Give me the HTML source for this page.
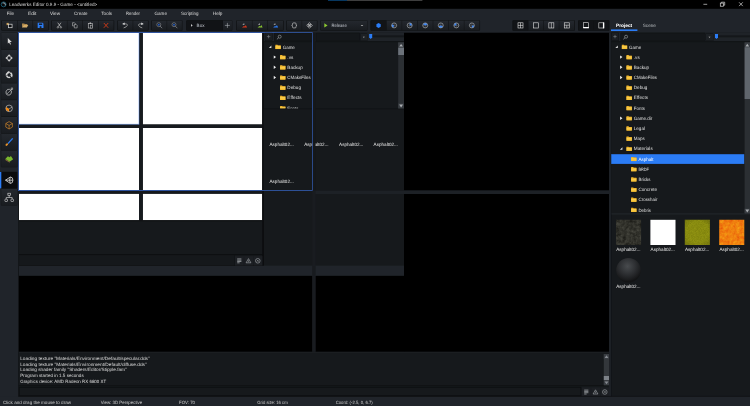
<!DOCTYPE html>
<html><head><meta charset="utf-8"><title>Leadwerks Editor</title>
<style>
html,body{margin:0;padding:0;background:#20242a;overflow:hidden}
svg{display:block;font-family:"Liberation Sans",sans-serif}
text{white-space:pre;text-rendering:geometricPrecision}
</style></head><body>
<svg width="750" height="406" viewBox="0 0 750 406">
<rect x="0.00" y="0.00" width="750.00" height="406.00" fill="#20242a" />
<rect x="0.00" y="0.00" width="750.00" height="8.80" fill="#000" />
<rect x="328.00" y="0.00" width="19.00" height="0.70" fill="#0b4f8a" />
<rect x="347.00" y="0.00" width="75.40" height="0.70" fill="#5a5a5a" />
<rect x="18.60" y="32.70" width="591.40" height="363.90" fill="#16191c" />
<rect x="404.00" y="32.80" width="205.20" height="157.70" fill="#000" />
<rect x="404.00" y="194.00" width="205.20" height="157.80" fill="#000" />
<rect x="18.80" y="275.70" width="293.60" height="76.10" fill="#000" />
<rect x="315.40" y="275.70" width="88.80" height="76.10" fill="#000" />
<rect x="312.40" y="190.50" width="296.90" height="3.50" fill="#1d2126" />
<rect x="312.20" y="190.40" width="3.40" height="161.40" fill="#191c20" />
<rect x="18.60" y="265.60" width="385.40" height="10.10" fill="#20242a" />
<rect x="312.20" y="265.60" width="3.40" height="10.10" fill="#181b1f" />
<rect x="610.00" y="32.70" width="140.00" height="363.90" fill="#16191c" />
<rect x="609.10" y="32.70" width="2.00" height="363.90" fill="#1e2227" />
<rect x="611.00" y="32.70" width="0.70" height="363.90" fill="#121417" />
<rect x="0.00" y="396.60" width="750.00" height="9.40" fill="#20242a" />
<rect x="19.00" y="33.00" width="120.10" height="91.50" fill="#ffffff" />
<rect x="142.80" y="33.00" width="119.40" height="91.50" fill="#ffffff" />
<rect x="19.00" y="128.00" width="120.10" height="62.00" fill="#ffffff" />
<rect x="142.80" y="128.00" width="119.40" height="62.00" fill="#ffffff" />
<rect x="19.00" y="193.70" width="120.10" height="26.50" fill="#ffffff" />
<rect x="142.80" y="193.70" width="119.40" height="26.50" fill="#ffffff" />
<rect x="139.10" y="33.00" width="3.70" height="187.20" fill="#171a1e" />
<rect x="19.00" y="124.50" width="243.20" height="3.50" fill="#171a1e" />
<rect x="19.00" y="190.00" width="243.20" height="3.70" fill="#15181c" />
<rect x="262.20" y="32.80" width="1.80" height="232.80" fill="#0c0d0f" />
<rect x="19.00" y="254.20" width="244.00" height="0.90" fill="#0c0e10" />
<rect x="19.00" y="265.00" width="244.00" height="0.70" fill="#101214" />
<rect x="19.00" y="220.20" width="243.20" height="1.10" fill="#0f1113" />
<rect x="18.20" y="190.60" width="0.80" height="206.00" fill="#121417" />
<rect x="18.6" y="32.7" width="294.0" height="157.8" fill="none" stroke="#3560b8" stroke-width="0.6"/>
<line x1="138.95" y1="33" x2="138.95" y2="124.5" stroke="#5f8ee8" stroke-width="0.5"/>
<line x1="19" y1="124.3" x2="139.2" y2="124.3" stroke="#5f8ee8" stroke-width="0.5"/>
<circle cx="3.6" cy="4.4" r="2.45" fill="#05080a" stroke="#1c5f78" stroke-width="0.9"/>
<path d="M3.0 3.0 A1.7 1.7 0 0 1 5.3 5.0" fill="none" stroke="#b8c0c4" stroke-width="0.9" stroke-linecap="round"/>
<g stroke="#d8d8d8" stroke-width="0.7" fill="none">
<line x1="703.4" y1="4.3" x2="707.2" y2="4.3"/>
<rect x="720.3" y="3.1" width="3.3" height="3.1"/>
<path d="M721.4 3.1 V2.2 H724.7 V5.2 H723.6"/>
<path d="M739.1 2.3 L742.8 6.1 M742.8 2.3 L739.1 6.1"/>
</g>
<defs><linearGradient id="bg" x1="0" y1="0" x2="0" y2="1"><stop offset="0" stop-color="#24282e"/><stop offset="1" stop-color="#191c20"/></linearGradient></defs>
<rect x="1.30" y="20.20" width="47.45" height="10.50" fill="#0e1012" rx="0.8"/>
<rect x="1.95" y="20.60" width="15.05" height="9.70" fill="url(#bg)" />
<rect x="17.50" y="20.60" width="15.05" height="9.70" fill="url(#bg)" />
<rect x="33.05" y="20.60" width="15.05" height="9.70" fill="url(#bg)" />
<rect x="51.20" y="20.20" width="63.00" height="10.50" fill="#0e1012" rx="0.8"/>
<rect x="51.85" y="20.60" width="15.05" height="9.70" fill="url(#bg)" />
<rect x="67.40" y="20.60" width="15.05" height="9.70" fill="url(#bg)" />
<rect x="82.95" y="20.60" width="15.05" height="9.70" fill="url(#bg)" />
<rect x="98.50" y="20.60" width="15.05" height="9.70" fill="url(#bg)" />
<rect x="117.30" y="20.20" width="31.30" height="10.50" fill="#0e1012" rx="0.8"/>
<rect x="117.95" y="20.60" width="14.75" height="9.70" fill="url(#bg)" />
<rect x="133.20" y="20.60" width="14.75" height="9.70" fill="url(#bg)" />
<rect x="151.30" y="20.20" width="31.20" height="10.50" fill="#0e1012" rx="0.8"/>
<rect x="151.95" y="20.60" width="14.70" height="9.70" fill="url(#bg)" />
<rect x="167.15" y="20.60" width="14.70" height="9.70" fill="url(#bg)" />
<rect x="186.20" y="20.20" width="46.10" height="10.50" fill="#0e1012" rx="0.8"/>
<rect x="186.70" y="20.60" width="35.90" height="9.70" fill="#111316" />
<rect x="223.00" y="20.60" width="8.90" height="9.70" fill="url(#bg)" />
<rect x="236.20" y="20.20" width="47.45" height="10.50" fill="#0e1012" rx="0.8"/>
<rect x="236.85" y="20.60" width="15.05" height="9.70" fill="url(#bg)" />
<rect x="252.40" y="20.60" width="15.05" height="9.70" fill="url(#bg)" />
<rect x="267.95" y="20.60" width="15.05" height="9.70" fill="url(#bg)" />
<rect x="286.30" y="20.20" width="31.20" height="10.50" fill="#0e1012" rx="0.8"/>
<rect x="286.95" y="20.60" width="14.70" height="9.70" fill="url(#bg)" />
<rect x="302.15" y="20.60" width="14.70" height="9.70" fill="url(#bg)" />
<rect x="320.30" y="20.20" width="47.20" height="10.50" fill="#0e1012" rx="0.8"/>
<rect x="320.70" y="20.60" width="46.40" height="9.70" fill="url(#bg)" />
<rect x="370.40" y="20.20" width="109.65" height="10.50" fill="#0e1012" rx="0.8"/>
<rect x="371.05" y="20.60" width="15.05" height="9.70" fill="#121417" />
<rect x="386.60" y="20.60" width="15.05" height="9.70" fill="url(#bg)" />
<rect x="402.15" y="20.60" width="15.05" height="9.70" fill="url(#bg)" />
<rect x="417.70" y="20.60" width="15.05" height="9.70" fill="url(#bg)" />
<rect x="433.25" y="20.60" width="15.05" height="9.70" fill="url(#bg)" />
<rect x="448.80" y="20.60" width="15.05" height="9.70" fill="url(#bg)" />
<rect x="464.35" y="20.60" width="15.05" height="9.70" fill="url(#bg)" />
<rect x="512.40" y="20.20" width="62.48" height="10.50" fill="#0e1012" rx="0.8"/>
<rect x="513.05" y="20.60" width="14.92" height="9.70" fill="#121417" />
<rect x="528.47" y="20.60" width="14.92" height="9.70" fill="url(#bg)" />
<rect x="543.89" y="20.60" width="14.92" height="9.70" fill="url(#bg)" />
<rect x="559.31" y="20.60" width="14.92" height="9.70" fill="url(#bg)" />
<rect x="578.00" y="20.20" width="31.50" height="10.50" fill="#0e1012" rx="0.8"/>
<rect x="578.65" y="20.60" width="14.85" height="9.70" fill="#121417" />
<rect x="594.00" y="20.60" width="14.85" height="9.70" fill="#121417" />
<rect x="0.90" y="32.70" width="16.40" height="16.90" fill="#0e1012" rx="0.8"/>
<rect x="1.20" y="33.00" width="15.80" height="16.30" fill="url(#bg)" />
<rect x="0.90" y="49.50" width="16.40" height="16.90" fill="#0e1012" rx="0.8"/>
<rect x="1.20" y="49.80" width="15.80" height="16.30" fill="url(#bg)" />
<rect x="0.90" y="66.30" width="16.40" height="16.90" fill="#0e1012" rx="0.8"/>
<rect x="1.20" y="66.60" width="15.80" height="16.30" fill="url(#bg)" />
<rect x="0.90" y="83.10" width="16.40" height="16.90" fill="#0e1012" rx="0.8"/>
<rect x="1.20" y="83.40" width="15.80" height="16.30" fill="url(#bg)" />
<rect x="0.90" y="99.90" width="16.40" height="16.90" fill="#0e1012" rx="0.8"/>
<rect x="1.20" y="100.20" width="15.80" height="16.30" fill="url(#bg)" />
<rect x="0.90" y="116.70" width="16.40" height="16.90" fill="#0e1012" rx="0.8"/>
<rect x="1.20" y="117.00" width="15.80" height="16.30" fill="url(#bg)" />
<rect x="0.90" y="133.50" width="16.40" height="16.90" fill="#0e1012" rx="0.8"/>
<rect x="1.20" y="133.80" width="15.80" height="16.30" fill="url(#bg)" />
<rect x="0.90" y="150.30" width="16.40" height="16.90" fill="#0e1012" rx="0.8"/>
<rect x="1.20" y="150.60" width="15.80" height="16.30" fill="url(#bg)" />
<rect x="0.90" y="171.70" width="16.40" height="16.90" fill="#0e1012" rx="0.8"/>
<rect x="1.20" y="172.00" width="15.80" height="16.30" fill="#0a0b0d" />
<rect x="0.00" y="172.00" width="1.30" height="16.30" fill="#2b7cf5" />
<rect x="0.90" y="188.70" width="16.40" height="16.90" fill="#0e1012" rx="0.8"/>
<rect x="1.20" y="189.00" width="15.80" height="16.30" fill="url(#bg)" />
<defs><linearGradient id="fg" x1="0" y1="0" x2="0" y2="1"><stop offset="0" stop-color="#fbd255"/><stop offset="1" stop-color="#f5bd30"/></linearGradient></defs>
<rect x="610.30" y="32.80" width="139.70" height="8.90" fill="#1f2328" />
<rect x="611.20" y="32.60" width="7.70" height="8.30" fill="#0e1012" rx="0.9"/>
<rect x="611.60" y="33.00" width="6.90" height="7.50" fill="#1b1e22" rx="0.6"/>
<path d="M613.30 36.6 h3.4 M615.00 34.9 v3.4" stroke="#8a8e92" stroke-width="0.55"/>
<rect x="620.50" y="32.80" width="84.80" height="8.20" fill="#0e1012" rx="0.8"/>
<rect x="620.90" y="33.20" width="84.10" height="7.50" fill="#14171a" rx="0.5"/>
<circle cx="626.10" cy="36.7" r="1.5" fill="none" stroke="#b0b4b8" stroke-width="0.55"/>
<line x1="625.00" y1="37.8" x2="623.30" y2="39.3" stroke="#b0b4b8" stroke-width="0.6"/>
<rect x="610.30" y="41.30" width="139.70" height="1.00" fill="#0e1012" />
<rect x="610.30" y="42.20" width="139.70" height="171.20" fill="#16191c" />
<path d="M617.80 45.50 V48.00 H615.30 z" fill="#e0e0e0"/>
<path d="M621.85 44.85 h2.0 l0.55 0.6 h2.75 v3.6 h-5.3 z" fill="#f3b92e"/>
<rect x="621.85" y="45.95" width="5.3" height="3.1" fill="url(#fg)"/>
<rect x="621.85" y="45.65" width="5.3" height="0.45" fill="#e3a21c"/>
<path d="M620.15 55.38 L622.45 57.09 L620.15 58.79 z" fill="#f0f0f0"/>
<path d="M626.50 55.04 h2.0 l0.55 0.6 h2.75 v3.6 h-5.3 z" fill="#f3b92e"/>
<rect x="626.50" y="56.13" width="5.3" height="3.1" fill="url(#fg)"/>
<rect x="626.50" y="55.84" width="5.3" height="0.45" fill="#e3a21c"/>
<path d="M620.15 65.57 L622.45 67.27 L620.15 68.97 z" fill="#f0f0f0"/>
<path d="M626.50 65.22 h2.0 l0.55 0.6 h2.75 v3.6 h-5.3 z" fill="#f3b92e"/>
<rect x="626.50" y="66.32" width="5.3" height="3.1" fill="url(#fg)"/>
<rect x="626.50" y="66.02" width="5.3" height="0.45" fill="#e3a21c"/>
<path d="M620.15 75.75 L622.45 77.45 L620.15 79.16 z" fill="#f0f0f0"/>
<path d="M626.50 75.41 h2.0 l0.55 0.6 h2.75 v3.6 h-5.3 z" fill="#f3b92e"/>
<rect x="626.50" y="76.50" width="5.3" height="3.1" fill="url(#fg)"/>
<rect x="626.50" y="76.20" width="5.3" height="0.45" fill="#e3a21c"/>
<path d="M626.50 85.59 h2.0 l0.55 0.6 h2.75 v3.6 h-5.3 z" fill="#f3b92e"/>
<rect x="626.50" y="86.69" width="5.3" height="3.1" fill="url(#fg)"/>
<rect x="626.50" y="86.39" width="5.3" height="0.45" fill="#e3a21c"/>
<path d="M626.50 95.78 h2.0 l0.55 0.6 h2.75 v3.6 h-5.3 z" fill="#f3b92e"/>
<rect x="626.50" y="96.88" width="5.3" height="3.1" fill="url(#fg)"/>
<rect x="626.50" y="96.58" width="5.3" height="0.45" fill="#e3a21c"/>
<path d="M626.50 105.96 h2.0 l0.55 0.6 h2.75 v3.6 h-5.3 z" fill="#f3b92e"/>
<rect x="626.50" y="107.06" width="5.3" height="3.1" fill="url(#fg)"/>
<rect x="626.50" y="106.76" width="5.3" height="0.45" fill="#e3a21c"/>
<path d="M620.15 116.49 L622.45 118.19 L620.15 119.89 z" fill="#f0f0f0"/>
<path d="M626.50 116.14 h2.0 l0.55 0.6 h2.75 v3.6 h-5.3 z" fill="#f3b92e"/>
<rect x="626.50" y="117.24" width="5.3" height="3.1" fill="url(#fg)"/>
<rect x="626.50" y="116.94" width="5.3" height="0.45" fill="#e3a21c"/>
<path d="M626.50 126.33 h2.0 l0.55 0.6 h2.75 v3.6 h-5.3 z" fill="#f3b92e"/>
<rect x="626.50" y="127.43" width="5.3" height="3.1" fill="url(#fg)"/>
<rect x="626.50" y="127.13" width="5.3" height="0.45" fill="#e3a21c"/>
<path d="M626.50 136.51 h2.0 l0.55 0.6 h2.75 v3.6 h-5.3 z" fill="#f3b92e"/>
<rect x="626.50" y="137.62" width="5.3" height="3.1" fill="url(#fg)"/>
<rect x="626.50" y="137.31" width="5.3" height="0.45" fill="#e3a21c"/>
<path d="M622.45 147.35 V149.85 H619.95 z" fill="#e0e0e0"/>
<path d="M626.50 146.70 h2.0 l0.55 0.6 h2.75 v3.6 h-5.3 z" fill="#f3b92e"/>
<rect x="626.50" y="147.80" width="5.3" height="3.1" fill="url(#fg)"/>
<rect x="626.50" y="147.50" width="5.3" height="0.45" fill="#e3a21c"/>
<rect x="611.40" y="154.20" width="132.90" height="9.70" fill="#2b7cf5" />
<path d="M631.15 156.88 h2.0 l0.55 0.6 h2.75 v3.6 h-5.3 z" fill="#f3b92e"/>
<rect x="631.15" y="157.99" width="5.3" height="3.1" fill="url(#fg)"/>
<rect x="631.15" y="157.69" width="5.3" height="0.45" fill="#e3a21c"/>
<path d="M631.15 167.07 h2.0 l0.55 0.6 h2.75 v3.6 h-5.3 z" fill="#f3b92e"/>
<rect x="631.15" y="168.17" width="5.3" height="3.1" fill="url(#fg)"/>
<rect x="631.15" y="167.87" width="5.3" height="0.45" fill="#e3a21c"/>
<path d="M631.15 177.25 h2.0 l0.55 0.6 h2.75 v3.6 h-5.3 z" fill="#f3b92e"/>
<rect x="631.15" y="178.36" width="5.3" height="3.1" fill="url(#fg)"/>
<rect x="631.15" y="178.06" width="5.3" height="0.45" fill="#e3a21c"/>
<path d="M631.15 187.44 h2.0 l0.55 0.6 h2.75 v3.6 h-5.3 z" fill="#f3b92e"/>
<rect x="631.15" y="188.54" width="5.3" height="3.1" fill="url(#fg)"/>
<rect x="631.15" y="188.24" width="5.3" height="0.45" fill="#e3a21c"/>
<path d="M631.15 197.62 h2.0 l0.55 0.6 h2.75 v3.6 h-5.3 z" fill="#f3b92e"/>
<rect x="631.15" y="198.73" width="5.3" height="3.1" fill="url(#fg)"/>
<rect x="631.15" y="198.43" width="5.3" height="0.45" fill="#e3a21c"/>
<path d="M631.15 207.81 h2.0 l0.55 0.6 h2.75 v3.6 h-5.3 z" fill="#f3b92e"/>
<rect x="631.15" y="208.91" width="5.3" height="3.1" fill="url(#fg)"/>
<rect x="631.15" y="208.61" width="5.3" height="0.45" fill="#e3a21c"/>
<rect x="705.60" y="33.30" width="7.80" height="7.70" fill="#101214" rx="0.6"/>
<rect x="706.00" y="33.70" width="7.00" height="6.90" fill="#1d2125" />
<path d="M708.5 36.7 h2.0 l-1.0 1.0 z" fill="#c8c8c8"/>
<rect x="718.00" y="35.30" width="32.00" height="2.00" fill="#14171a" />
<path d="M715.0 34.0 h3.0 v3.6 l-1.5 1.5 l-1.5 -1.5 z" fill="#2b7cf5"/>
<rect x="610.30" y="213.40" width="139.70" height="1.00" fill="#24282d" />
<rect x="744.60" y="42.40" width="5.40" height="171.00" fill="#2b2f33" />
<rect x="744.60" y="42.40" width="5.40" height="4.60" fill="#383c41" />
<rect x="744.60" y="208.60" width="5.40" height="4.80" fill="#383c41" />
<rect x="744.60" y="47.20" width="5.40" height="51.80" fill="#5f656c" />
<path d="M745.4 46.4 L747.3 43.8 L749.2 46.4 z" fill="#a8acb0"/>
<path d="M745.4 209.6 L747.3 212.4 L749.2 209.6 z" fill="#a8acb0"/>
<defs><clipPath id="cg1"><rect x="263.6" y="42" width="48.6" height="66.6"/></clipPath><clipPath id="cg2"><rect x="315.4" y="109.6" width="88.6" height="81"/></clipPath><clipPath id="cg0"><rect x="263.6" y="109.6" width="48.6" height="81"/></clipPath></defs>
<rect x="263.90" y="32.80" width="48.40" height="8.90" fill="#1f2328" />
<rect x="264.80" y="32.60" width="7.70" height="8.30" fill="#0e1012" rx="0.9"/>
<rect x="265.20" y="33.00" width="6.90" height="7.50" fill="#1b1e22" rx="0.6"/>
<path d="M266.90 36.6 h3.4 M268.60 34.9 v3.4" stroke="#8a8e92" stroke-width="0.55"/>
<rect x="274.10" y="32.80" width="38.20" height="8.20" fill="#0e1012" rx="0.8"/>
<rect x="274.50" y="33.20" width="37.50" height="7.50" fill="#14171a" rx="0.5"/>
<circle cx="279.70" cy="36.7" r="1.5" fill="none" stroke="#b0b4b8" stroke-width="0.55"/>
<line x1="278.60" y1="37.8" x2="276.90" y2="39.3" stroke="#b0b4b8" stroke-width="0.6"/>
<rect x="263.90" y="41.30" width="48.40" height="1.00" fill="#0e1012" />
<rect x="263.90" y="42.20" width="48.40" height="66.40" fill="#16191c" />
<g clip-path="url(#cg1)">
<path d="M271.40 45.50 V48.00 H268.90 z" fill="#e0e0e0"/>
<path d="M275.45 44.85 h2.0 l0.55 0.6 h2.75 v3.6 h-5.3 z" fill="#f3b92e"/>
<rect x="275.45" y="45.95" width="5.3" height="3.1" fill="url(#fg)"/>
<rect x="275.45" y="45.65" width="5.3" height="0.45" fill="#e3a21c"/>
<path d="M273.75 55.38 L276.05 57.09 L273.75 58.79 z" fill="#f0f0f0"/>
<path d="M280.10 55.04 h2.0 l0.55 0.6 h2.75 v3.6 h-5.3 z" fill="#f3b92e"/>
<rect x="280.10" y="56.13" width="5.3" height="3.1" fill="url(#fg)"/>
<rect x="280.10" y="55.84" width="5.3" height="0.45" fill="#e3a21c"/>
<path d="M273.75 65.57 L276.05 67.27 L273.75 68.97 z" fill="#f0f0f0"/>
<path d="M280.10 65.22 h2.0 l0.55 0.6 h2.75 v3.6 h-5.3 z" fill="#f3b92e"/>
<rect x="280.10" y="66.32" width="5.3" height="3.1" fill="url(#fg)"/>
<rect x="280.10" y="66.02" width="5.3" height="0.45" fill="#e3a21c"/>
<path d="M273.75 75.75 L276.05 77.45 L273.75 79.16 z" fill="#f0f0f0"/>
<path d="M280.10 75.41 h2.0 l0.55 0.6 h2.75 v3.6 h-5.3 z" fill="#f3b92e"/>
<rect x="280.10" y="76.50" width="5.3" height="3.1" fill="url(#fg)"/>
<rect x="280.10" y="76.20" width="5.3" height="0.45" fill="#e3a21c"/>
<path d="M280.10 85.59 h2.0 l0.55 0.6 h2.75 v3.6 h-5.3 z" fill="#f3b92e"/>
<rect x="280.10" y="86.69" width="5.3" height="3.1" fill="url(#fg)"/>
<rect x="280.10" y="86.39" width="5.3" height="0.45" fill="#e3a21c"/>
<path d="M280.10 95.78 h2.0 l0.55 0.6 h2.75 v3.6 h-5.3 z" fill="#f3b92e"/>
<rect x="280.10" y="96.88" width="5.3" height="3.1" fill="url(#fg)"/>
<rect x="280.10" y="96.58" width="5.3" height="0.45" fill="#e3a21c"/>
<path d="M280.10 105.96 h2.0 l0.55 0.6 h2.75 v3.6 h-5.3 z" fill="#f3b92e"/>
<rect x="280.10" y="107.06" width="5.3" height="3.1" fill="url(#fg)"/>
<rect x="280.10" y="106.76" width="5.3" height="0.45" fill="#e3a21c"/>
</g>
<rect x="263.60" y="108.60" width="48.70" height="0.90" fill="#0e1012" />
<rect x="263.60" y="109.50" width="48.70" height="80.70" fill="#16191c" />
<rect x="315.40" y="32.80" width="88.60" height="8.90" fill="#1f2328" />
<rect x="315.80" y="32.80" width="44.10" height="8.20" fill="#0e1012" rx="0.8"/>
<rect x="316.20" y="33.20" width="43.40" height="7.50" fill="#14171a" rx="0.5"/>
<rect x="315.40" y="41.30" width="88.60" height="1.00" fill="#0e1012" />
<rect x="360.10" y="33.30" width="7.30" height="7.70" fill="#101214" rx="0.6"/>
<rect x="360.50" y="33.70" width="6.50" height="6.90" fill="#1d2125" />
<path d="M362.8 36.7 h2.0 l-1.0 1.0 z" fill="#c8c8c8"/>
<rect x="372.00" y="35.30" width="32.00" height="2.00" fill="#14171a" />
<path d="M369.2 34.0 h3.0 v3.6 l-1.5 1.5 l-1.5 -1.5 z" fill="#2b7cf5"/>
<rect x="315.40" y="42.20" width="88.60" height="66.40" fill="#16191c" />
<rect x="315.40" y="108.60" width="88.60" height="0.90" fill="#0e1012" />
<rect x="315.40" y="109.50" width="88.60" height="80.90" fill="#16191c" />
<rect x="398.20" y="42.40" width="5.80" height="66.00" fill="#2b2f33" />
<rect x="398.20" y="42.40" width="5.80" height="5.00" fill="#383c41" />
<rect x="398.20" y="103.40" width="5.80" height="5.00" fill="#383c41" />
<rect x="398.20" y="47.60" width="5.80" height="7.40" fill="#6c727a" />
<path d="M399.2 46.6 L401.1 44.0 L403.0 46.6 z" fill="#a8acb0"/>
<path d="M399.2 104.6 L401.1 107.4 L403.0 104.6 z" fill="#a8acb0"/>
<rect x="312.60" y="32.80" width="2.80" height="157.60" fill="#15181b" />
<defs><filter id="nz1" x="0" y="0" width="100%" height="100%" color-interpolation-filters="sRGB"><feTurbulence type="fractalNoise" baseFrequency="0.30" numOctaves="3" seed="3"/><feColorMatrix type="matrix" values="0.24 0 0 0 0.075  0.24 0 0 0 0.075  0.22 0 0 0 0.06  0 0 0 0 1"/></filter><filter id="nz3" x="0" y="0" width="100%" height="100%" color-interpolation-filters="sRGB"><feTurbulence type="fractalNoise" baseFrequency="1.3" numOctaves="2" seed="8"/><feColorMatrix type="matrix" values="0.12 0 0 0 0.475  0.12 0 0 0 0.485  0.04 0 0 0 0.04  0 0 0 0 1"/></filter><filter id="nz4" x="0" y="0" width="100%" height="100%" color-interpolation-filters="sRGB"><feTurbulence type="fractalNoise" baseFrequency="0.30" numOctaves="3" seed="5"/><feColorMatrix type="matrix" values="0.06 0 0 0 0.91  0.36 0 0 0 0.32  0.06 0 0 0 0.03  0 0 0 0 1"/></filter><radialGradient id="sph" cx="0.46" cy="0.34" r="0.62"><stop offset="0" stop-color="#484b4e"/><stop offset="0.5" stop-color="#2f3134"/><stop offset="0.88" stop-color="#1b1c1e"/><stop offset="1" stop-color="#131415"/></radialGradient><radialGradient id="vig" cx="0.5" cy="0.5" r="0.75"><stop offset="0.6" stop-color="#000" stop-opacity="0"/><stop offset="1" stop-color="#000" stop-opacity="0.22"/></radialGradient></defs>
<defs><clipPath id="tc0"><rect x="616.00" y="219.80" width="25.1" height="25.20"/></clipPath><clipPath id="tc1"><rect x="650.40" y="219.80" width="25.1" height="25.20"/></clipPath><clipPath id="tc2"><rect x="684.80" y="219.80" width="25.1" height="25.20"/></clipPath><clipPath id="tc3"><rect x="719.20" y="219.80" width="25.1" height="25.20"/></clipPath></defs>
<g clip-path="url(#tc0)">
<rect x="615.00" y="218.80" width="27.10" height="27.20" fill="#33332f" filter="url(#nz1)"/>
</g>
<rect x="650.40" y="219.80" width="25.10" height="25.20" fill="#ffffff" />
<g clip-path="url(#tc2)">
<rect x="683.80" y="218.80" width="27.10" height="27.20" fill="#85870f" filter="url(#nz3)"/>
</g>
<rect x="684.80" y="219.80" width="25.10" height="25.20" fill="url(#vig)" />
<g clip-path="url(#tc3)">
<rect x="718.20" y="218.80" width="27.10" height="27.20" fill="#ef7a0c" filter="url(#nz4)"/>
</g>
<circle cx="628.50" cy="270.2" r="12.3" fill="url(#sph)"/>
<rect x="18.80" y="351.80" width="590.50" height="1.20" fill="#1d2024" />
<rect x="18.80" y="352.80" width="590.50" height="32.60" fill="#16191c" />
<rect x="18.80" y="385.40" width="590.50" height="0.80" fill="#0e1012" />
<rect x="18.80" y="386.20" width="590.50" height="10.40" fill="#16191c" />
<rect x="603.80" y="354.00" width="5.40" height="31.20" fill="#33373b" />
<rect x="603.80" y="376.00" width="5.40" height="4.00" fill="#7d8288" />
<rect x="603.80" y="354.00" width="5.40" height="5.00" fill="#3a3e43" />
<rect x="603.80" y="380.20" width="5.40" height="5.00" fill="#3a3e43" />
<path d="M604.6 358.0 L606.5 355.2 L608.4 358.0 z" fill="#858a90"/>
<path d="M604.6 381.4 L606.5 384.2 L608.4 381.4 z" fill="#858a90"/>
<rect x="19.3" y="387.3" width="561.6" height="8.5" fill="#16191c" stroke="#0c0e10" stroke-width="0.7"/>
<rect x="581.90" y="387.30" width="8.90" height="9.40" fill="#1c1f23" />
<rect x="591.20" y="387.30" width="8.90" height="9.40" fill="#1c1f23" />
<rect x="600.50" y="387.30" width="8.90" height="9.40" fill="#1c1f23" />
<path d="M584.20 390.10 h4.2 M584.20 391.40 h4.2 M584.20 392.70 h4.2 M584.20 394.00 h2.4" stroke="#a6aaae" stroke-width="0.75"/>
<path d="M595.50 389.80 L597.90 394.00 H593.10 z" fill="none" stroke="#a6aaae" stroke-width="0.6"/>
<line x1="595.50" y1="391.40" x2="595.50" y2="393.30" stroke="#a6aaae" stroke-width="0.5"/>
<circle cx="604.80" cy="392.00" r="2.3" fill="none" stroke="#a6aaae" stroke-width="0.6"/>
<path d="M603.90 391.10 l1.8 1.8 M605.70 391.10 l-1.8 1.8" stroke="#a6aaae" stroke-width="0.5"/>
<rect x="19.20" y="255.60" width="215.00" height="9.60" fill="#15181b" />
<rect x="234.20" y="255.20" width="0.40" height="10.40" fill="#0e1012" />
<rect x="234.90" y="256.10" width="8.90" height="9.40" fill="#1c1f23" />
<rect x="244.20" y="256.10" width="8.90" height="9.40" fill="#1c1f23" />
<rect x="253.50" y="256.10" width="8.90" height="9.40" fill="#1c1f23" />
<path d="M237.20 258.90 h4.2 M237.20 260.20 h4.2 M237.20 261.50 h4.2 M237.20 262.80 h2.4" stroke="#a6aaae" stroke-width="0.75"/>
<path d="M248.50 258.60 L250.90 262.80 H246.10 z" fill="none" stroke="#a6aaae" stroke-width="0.6"/>
<line x1="248.50" y1="260.20" x2="248.50" y2="262.10" stroke="#a6aaae" stroke-width="0.5"/>
<circle cx="257.80" cy="260.80" r="2.3" fill="none" stroke="#a6aaae" stroke-width="0.6"/>
<path d="M256.90 259.90 l1.8 1.8 M258.70 259.90 l-1.8 1.8" stroke="#a6aaae" stroke-width="0.5"/>
<rect x="18.6" y="32.7" width="294.0" height="157.8" fill="none" stroke="#3560b8" stroke-width="0.6"/>
<rect x="6.57" y="22.90" width="2.2" height="2.2" fill="#c9a15e"/>
<rect x="8.57" y="24.20" width="3.5" height="3.5" fill="#0e1012" stroke="#dcdcdc" stroke-width="0.7"/>
<path d="M22.03 23.40 h2.2 l0.5 0.6 h2.6 v0.9 h-3.6 l-1.7 2.6 z" fill="#b08a4c"/>
<path d="M23.53 25.10 h4.7 l-1.3 2.5 h-4.9 z" fill="#d6ad68"/>
<path d="M37.68 22.80 h4.9 l0.9 0.9 v4.2 h-5.8 z" fill="#2b7cf5"/>
<rect x="38.98" y="23.50" width="3.2" height="1.4" fill="#16191c"/>
<rect x="39.68" y="26.30" width="1.8" height="1.6" fill="#16191c"/>
<path d="M57.77 22.70 L60.48 26.60 M60.98 22.70 L58.27 26.60" stroke="#c8c8c8" stroke-width="0.7" fill="none"/>
<circle cx="57.88" cy="27.30" r="0.75" fill="none" stroke="#c8c8c8" stroke-width="0.55"/>
<circle cx="60.88" cy="27.30" r="0.75" fill="none" stroke="#c8c8c8" stroke-width="0.55"/>
<path d="M72.53 22.70 h1.9 l0.9 0.9 v2.3 h-2.8 z" fill="none" stroke="#c4c4c4" stroke-width="0.55"/>
<path d="M74.33 24.40 h1.9 l0.9 0.9 v2.6 h-2.8 z" fill="#1e2226" stroke="#c4c4c4" stroke-width="0.55"/>
<rect x="88.27" y="23.40" width="4.0" height="4.6" fill="none" stroke="#c4c4c4" stroke-width="0.6"/>
<rect x="89.57" y="22.50" width="1.5" height="1.3" fill="#c4c4c4"/>
<rect x="90.27" y="25.20" width="2.3" height="2.9" fill="#1e2226" stroke="#c4c4c4" stroke-width="0.5"/>
<path d="M103.83 23.00 L108.23 27.80 M108.23 23.00 L103.83 27.80" stroke="#d23a16" stroke-width="0.9" fill="none"/>
<path d="M124.53 23.85 Q128.03 23.50 127.23 25.60 Q126.53 27.10 124.03 27.80" stroke="#b8b8b8" stroke-width="0.7" fill="none" stroke-linecap="round"/>
<path d="M122.12 23.90 L124.62 22.60 L124.62 25.00 z" fill="#e8e8e8"/>
<path d="M141.38 23.85 Q137.88 23.50 138.67 25.60 Q139.38 27.10 141.88 27.80" stroke="#b8b8b8" stroke-width="0.7" fill="none" stroke-linecap="round"/>
<path d="M143.77 23.90 L141.27 22.60 L141.27 25.00 z" fill="#e8e8e8"/>
<circle cx="158.80" cy="24.70" r="2.0" fill="#14171a" stroke="#90949a" stroke-width="0.6"/>
<circle cx="158.80" cy="24.70" r="1.0" fill="#2458b8"/>
<line x1="160.20" y1="26.20" x2="162.10" y2="28.20" stroke="#90949a" stroke-width="0.7"/>
<circle cx="174.00" cy="24.70" r="2.0" fill="#14171a" stroke="#90949a" stroke-width="0.6"/>
<circle cx="174.00" cy="24.70" r="1.0" fill="#2458b8"/>
<line x1="175.40" y1="26.20" x2="177.30" y2="28.20" stroke="#90949a" stroke-width="0.7"/>
<path d="M191.0 24.00 l1.7 1.4 l-1.7 1.4 z" fill="#c8c8c8"/>
<path d="M224.9 25.40 h5.0 M227.4 22.90 v5.0" stroke="#b8bcc0" stroke-width="0.55"/>
<path d="M241.97 27.50 L243.97 25.90 L244.88 26.40 L245.78 25.10 L247.07 27.50 z" fill="#d8381a"/>
<path d="M242.68 24.50 h1.6 M243.88 23.20 v1.6" stroke="#d0d0d0" stroke-width="0.5"/>
<path d="M257.53 27.50 L259.53 25.90 L260.43 26.40 L261.32 25.10 L262.62 27.50 z" fill="#8cc832"/>
<path d="M258.23 24.50 h1.6 M259.43 23.20 v1.6" stroke="#d0d0d0" stroke-width="0.5"/>
<path d="M273.08 27.50 L275.08 25.90 L275.98 26.40 L276.88 25.10 L278.18 27.50 z" fill="#2b7cf5"/>
<path d="M273.78 24.50 h1.6 M274.98 23.20 v1.6" stroke="#d0d0d0" stroke-width="0.5"/>
<path d="M293.50 22.90 q-1.0 0 -1.0 1.0 v0.6 q0 0.9 -0.8 0.9 q0.8 0 0.8 0.9 v0.6 q0 1.0 1.0 1.0 M295.10 22.90 q1.0 0 1.0 1.0 v0.6 q0 0.9 0.8 0.9 q-0.8 0 -0.8 0.9 v0.6 q0 1.0 -1.0 1.0 M293.50 22.90 h1.6 M293.50 27.90 h1.6" stroke="#dcdcdc" stroke-width="0.6" fill="none"/>
<path d="M309.50 22.60 L312.30 25.40 L309.50 28.20 L306.70 25.40 z M308.10 24.00 L310.90 26.80 M310.90 24.00 L308.10 26.80" stroke="#dcdcdc" stroke-width="0.6" fill="none"/>
<circle cx="309.50" cy="25.40" r="1.0" fill="none" stroke="#dcdcdc" stroke-width="0.5"/>
<path d="M324.3 23.20 L327.6 25.40 L324.3 27.60 z" fill="#8cc832"/>
<path d="M360.7 24.90 h2.6 l-1.3 1.2 z" fill="#d0d0d0"/>
<polygon points="380.74,26.65 378.57,27.90 376.41,26.65 376.41,24.15 378.57,22.90 380.74,24.15" fill="#2b7cf5"/>
<path d="M394.12 25.40 L393.34 27.56 A2.3 2.3 0 0 1 392.13 24.25 z" fill="#2b7cf5"/>
<circle cx="394.12" cy="25.40" r="2.5" fill="none" stroke="#c4c8cc" stroke-width="0.55"/>
<path d="M391.73 25.40 h4.8 M394.12 23.00 v4.8" stroke="#c4c8cc" stroke-width="0.3" opacity="0.6"/>
<path d="M409.68 25.40 L409.68 23.10 A2.3 2.3 0 0 1 411.98 25.40 z" fill="#2b7cf5"/>
<circle cx="409.68" cy="25.40" r="2.5" fill="none" stroke="#c4c8cc" stroke-width="0.55"/>
<path d="M407.28 25.40 h4.8 M409.68 23.00 v4.8" stroke="#c4c8cc" stroke-width="0.3" opacity="0.6"/>
<path d="M425.23 25.40 L423.06 24.61 A2.3 2.3 0 0 1 427.39 24.61 z" fill="#2b7cf5"/>
<circle cx="425.23" cy="25.40" r="2.5" fill="none" stroke="#c4c8cc" stroke-width="0.55"/>
<path d="M422.83 25.40 h4.8 M425.23 23.00 v4.8" stroke="#c4c8cc" stroke-width="0.3" opacity="0.6"/>
<path d="M440.78 25.40 L442.94 26.19 A2.3 2.3 0 0 1 438.61 26.19 z" fill="#2b7cf5"/>
<circle cx="440.78" cy="25.40" r="2.5" fill="none" stroke="#c4c8cc" stroke-width="0.55"/>
<path d="M438.38 25.40 h4.8 M440.78 23.00 v4.8" stroke="#c4c8cc" stroke-width="0.3" opacity="0.6"/>
<path d="M456.33 25.40 L454.03 25.40 A2.3 2.3 0 0 1 456.33 23.10 z" fill="#2b7cf5"/>
<circle cx="456.33" cy="25.40" r="2.5" fill="none" stroke="#c4c8cc" stroke-width="0.55"/>
<path d="M453.93 25.40 h4.8 M456.33 23.00 v4.8" stroke="#c4c8cc" stroke-width="0.3" opacity="0.6"/>
<path d="M471.88 25.40 L474.18 25.40 A2.3 2.3 0 0 1 471.88 27.70 z" fill="#2b7cf5"/>
<circle cx="471.88" cy="25.40" r="2.5" fill="none" stroke="#c4c8cc" stroke-width="0.55"/>
<path d="M469.48 25.40 h4.8 M471.88 23.00 v4.8" stroke="#c4c8cc" stroke-width="0.3" opacity="0.6"/>
<rect x="518.01" y="22.80" width="5" height="5.2" fill="none" stroke="#e4e4e4" stroke-width="0.6"/>
<path d="M520.51 22.80 v5.2 M518.01 25.40 h5" stroke="#e4e4e4" stroke-width="0.6"/>
<rect x="533.43" y="22.80" width="5" height="5.2" fill="none" stroke="#e4e4e4" stroke-width="0.6"/>
<rect x="548.85" y="22.80" width="5" height="5.2" fill="none" stroke="#e4e4e4" stroke-width="0.6"/>
<path d="M551.35 22.80 v5.2" stroke="#e4e4e4" stroke-width="0.6"/>
<rect x="564.27" y="22.80" width="5" height="5.2" fill="none" stroke="#e4e4e4" stroke-width="0.6"/>
<path d="M564.27 25.20 h5 M566.77 25.20 v2.8" stroke="#e4e4e4" stroke-width="0.6"/>
<rect x="583.57" y="22.70" width="5" height="5.0" fill="none" stroke="#e4e4e4" stroke-width="0.6"/>
<rect x="583.27" y="27.00" width="5.6" height="1.3" fill="#ffffff"/>
<rect x="598.82" y="22.80" width="5" height="5.2" fill="none" stroke="#e4e4e4" stroke-width="0.6"/>
<rect x="602.92" y="22.50" width="1.3" height="5.8" fill="#ffffff"/>
<rect x="611.00" y="29.40" width="26.40" height="1.60" fill="#2b7cf5" />
<path d="M7.80 38.00 v5.6 l1.3 -1.2 l1.0 2.2 l0.9 -0.4 l-1.0 -2.2 h1.8 z" fill="#d8d8d8"/>
<path d="M9.10 54.30 l2.1 2.3 h-4.2 z M9.10 61.70 l2.1 -2.3 h-4.2 z M5.40 58.00 l2.3 -2.1 v4.2 z M12.80 58.00 l-2.3 -2.1 v4.2 z" fill="#cfcfcf"/>
<circle cx="9.10" cy="74.90" r="2.5" fill="none" stroke="#d4d4d4" stroke-width="1.5" stroke-dasharray="4.1 1.14" transform="rotate(-60 9.10 74.90)"/>
<path d="M7.80 71.30 l2.2 0.6 l-1.8 1.6 z M12.70 75.20 l-0.6 2.2 l-1.6 -1.8 z M5.70 75.80 l0.2 -2.2 l1.9 1.3 z" fill="#d4d4d4"/>
<ellipse cx="8.70" cy="92.20" rx="2.7" ry="3.0" fill="none" stroke="#d0d0d0" stroke-width="0.65" transform="rotate(20 8.70 92.20)"/>
<path d="M6.70 94.20 L12.00 89.00" stroke="#d0d0d0" stroke-width="0.6"/>
<rect x="11.10" y="88.00" width="1.7" height="1.7" fill="none" stroke="#d0d0d0" stroke-width="0.5"/>
<circle cx="9.10" cy="108.40" r="3.3" fill="none" stroke="#d8d8d8" stroke-width="0.6"/>
<path d="M6.00 107.10 L9.10 108.80 V111.80 L6.00 110.10 z" fill="#f08a18"/>
<path d="M9.10 108.80 L12.20 107.10" stroke="#d8d8d8" stroke-width="0.5"/>
<path d="M9.10 121.60 L12.40 123.50 V127.10 L9.10 129.00 L5.80 127.10 V123.50 z M5.80 123.50 L9.10 125.40 L12.40 123.50 M9.10 125.40 V129.00" fill="none" stroke="#e8922a" stroke-width="0.6"/>
<path d="M12.70 138.40 L7.90 143.60" stroke="#2b7cf5" stroke-width="1.35"/>
<ellipse cx="6.80" cy="144.60" rx="1.5" ry="1.0" fill="#e8922a" transform="rotate(-40 6.80 144.60)"/>
<path d="M5.30 159.00 L7.90 156.20 L9.50 157.20 L10.90 156.00 L13.10 159.20 L9.70 161.80 z" fill="#7ab82e"/>
<path d="M5.30 159.00 L9.70 161.80 v1.0 L5.30 160.00 z" fill="#8a6a3a"/>
<path d="M5.50 180.20 L10.30 177.00 q2.6 0 2.6 3.2 q0 3.2 -2.6 3.2 z M5.50 180.20 L12.90 180.20 M10.30 177.00 q-1.4 3.2 0 6.4" fill="none" stroke="#e8e8e8" stroke-width="0.75"/>
<rect x="7.90" y="193.20" width="2.6" height="2.4" fill="none" stroke="#e0e0e0" stroke-width="0.6"/>
<path d="M9.20 195.60 v1.9 M6.20 199.10 v-1.6 h6.0 v1.6" fill="none" stroke="#e0e0e0" stroke-width="0.6"/>
<rect x="4.90" y="199.20" width="2.6" height="2.3" rx="0.6" fill="none" stroke="#e0e0e0" stroke-width="0.6"/>
<rect x="10.90" y="199.20" width="2.6" height="2.3" rx="0.6" fill="none" stroke="#e0e0e0" stroke-width="0.6"/>
<rect x="609.10" y="32.70" width="1.90" height="363.90" fill="#1e2227" />
<rect x="610.90" y="32.70" width="0.50" height="363.90" fill="#131619" />
<rect x="611.40" y="154.20" width="0.60" height="9.70" fill="#2b7cf5" />
<rect x="18.60" y="395.90" width="731.40" height="0.80" fill="#101214" />
<defs><filter id="tf" x="-5%" y="-5%" width="110%" height="110%" color-interpolation-filters="sRGB"><feGaussianBlur stdDeviation="0.05"/><feComponentTransfer><feFuncA type="linear" slope="1.05"/></feComponentTransfer></filter></defs>
<g filter="url(#tf)">
<text transform="scale(0.125)" x="73.60" y="48.00" font-size="37.60" fill="#d2d2d2" textLength="704.00" lengthAdjust="spacingAndGlyphs">Leadwerks Editor 0.9.9 - Game - &lt;untitled&gt;</text>
<text transform="scale(0.125)" x="54.40" y="123.20" font-size="37.60" fill="#d6d6d6" textLength="57.60" lengthAdjust="spacingAndGlyphs">File</text>
<text transform="scale(0.125)" x="223.20" y="123.20" font-size="37.60" fill="#d6d6d6" textLength="68.80" lengthAdjust="spacingAndGlyphs">Edit</text>
<text transform="scale(0.125)" x="400.00" y="123.20" font-size="37.60" fill="#d6d6d6" textLength="80.00" lengthAdjust="spacingAndGlyphs">View</text>
<text transform="scale(0.125)" x="592.00" y="123.20" font-size="37.60" fill="#d6d6d6" textLength="107.20" lengthAdjust="spacingAndGlyphs">Create</text>
<text transform="scale(0.125)" x="810.40" y="123.20" font-size="37.60" fill="#d6d6d6" textLength="85.60" lengthAdjust="spacingAndGlyphs">Tools</text>
<text transform="scale(0.125)" x="1008.00" y="123.20" font-size="37.60" fill="#d6d6d6" textLength="112.00" lengthAdjust="spacingAndGlyphs">Render</text>
<text transform="scale(0.125)" x="1236.00" y="123.20" font-size="37.60" fill="#d6d6d6" textLength="100.00" lengthAdjust="spacingAndGlyphs">Game</text>
<text transform="scale(0.125)" x="1448.00" y="123.20" font-size="37.60" fill="#d6d6d6" textLength="140.00" lengthAdjust="spacingAndGlyphs">Scripting</text>
<text transform="scale(0.125)" x="1702.40" y="123.20" font-size="37.60" fill="#d6d6d6" textLength="77.60" lengthAdjust="spacingAndGlyphs">Help</text>
<text transform="scale(0.125)" x="24.00" y="3228.80" font-size="36.80" fill="#c4c4c4" textLength="544.00" lengthAdjust="spacingAndGlyphs">Click and drag the mouse to draw</text>
<text transform="scale(0.125)" x="805.60" y="3228.80" font-size="36.80" fill="#c4c4c4" textLength="332.00" lengthAdjust="spacingAndGlyphs">View: 3D Perspective</text>
<text transform="scale(0.125)" x="1432.00" y="3228.80" font-size="36.80" fill="#c4c4c4" textLength="128.00" lengthAdjust="spacingAndGlyphs">FOV: 70</text>
<text transform="scale(0.125)" x="2058.40" y="3228.80" font-size="36.80" fill="#c4c4c4" textLength="243.20" lengthAdjust="spacingAndGlyphs">Grid size: 16 cm</text>
<text transform="scale(0.125)" x="2685.60" y="3228.80" font-size="36.80" fill="#c4c4c4" textLength="296.00" lengthAdjust="spacingAndGlyphs">Coord: (-2.5, 0, 6.7)</text>
<text transform="scale(0.125)" x="5032.80" y="388.40" font-size="37.60" fill="#dedede" textLength="96.80" lengthAdjust="spacingAndGlyphs">Game</text>
<text transform="scale(0.125)" x="5070.00" y="469.88" font-size="37.60" fill="#dedede" textLength="48.00" lengthAdjust="spacingAndGlyphs">.vs</text>
<text transform="scale(0.125)" x="5070.00" y="551.36" font-size="37.60" fill="#dedede" textLength="123.20" lengthAdjust="spacingAndGlyphs">Backup</text>
<text transform="scale(0.125)" x="5070.00" y="632.84" font-size="37.60" fill="#dedede" textLength="186.40" lengthAdjust="spacingAndGlyphs">CMakeFiles</text>
<text transform="scale(0.125)" x="5070.00" y="714.32" font-size="37.60" fill="#dedede" textLength="108.80" lengthAdjust="spacingAndGlyphs">Debug</text>
<text transform="scale(0.125)" x="5070.00" y="795.80" font-size="37.60" fill="#dedede" textLength="114.40" lengthAdjust="spacingAndGlyphs">Effects</text>
<text transform="scale(0.125)" x="5070.00" y="877.28" font-size="37.60" fill="#dedede" textLength="89.60" lengthAdjust="spacingAndGlyphs">Fonts</text>
<text transform="scale(0.125)" x="5070.00" y="958.76" font-size="37.60" fill="#dedede" textLength="148.80" lengthAdjust="spacingAndGlyphs">Game.dir</text>
<text transform="scale(0.125)" x="5070.00" y="1040.24" font-size="37.60" fill="#dedede" textLength="89.60" lengthAdjust="spacingAndGlyphs">Legal</text>
<text transform="scale(0.125)" x="5070.00" y="1121.72" font-size="37.60" fill="#dedede" textLength="88.00" lengthAdjust="spacingAndGlyphs">Maps</text>
<text transform="scale(0.125)" x="5070.00" y="1203.20" font-size="37.60" fill="#dedede" textLength="152.00" lengthAdjust="spacingAndGlyphs">Materials</text>
<text transform="scale(0.125)" x="5107.20" y="1284.68" font-size="37.60" fill="#ffffff" textLength="120.00" lengthAdjust="spacingAndGlyphs">Asphalt</text>
<text transform="scale(0.125)" x="5107.20" y="1366.16" font-size="37.60" fill="#dedede" textLength="84.80" lengthAdjust="spacingAndGlyphs">BRDF</text>
<text transform="scale(0.125)" x="5107.20" y="1447.64" font-size="37.60" fill="#dedede" textLength="97.60" lengthAdjust="spacingAndGlyphs">Bricks</text>
<text transform="scale(0.125)" x="5107.20" y="1529.12" font-size="37.60" fill="#dedede" textLength="148.80" lengthAdjust="spacingAndGlyphs">Concrete</text>
<text transform="scale(0.125)" x="5107.20" y="1610.60" font-size="37.60" fill="#dedede" textLength="153.60" lengthAdjust="spacingAndGlyphs">Crosshair</text>
<text transform="scale(0.125)" x="5107.20" y="1692.08" font-size="37.60" fill="#dedede" textLength="100.80" lengthAdjust="spacingAndGlyphs">Debris</text>
<g clip-path="url(#cg1)"><text transform="scale(0.125)" x="2261.60" y="388.40" font-size="37.60" fill="#dedede" textLength="96.80" lengthAdjust="spacingAndGlyphs">Game</text></g>
<g clip-path="url(#cg1)"><text transform="scale(0.125)" x="2298.80" y="469.88" font-size="37.60" fill="#dedede" textLength="48.00" lengthAdjust="spacingAndGlyphs">.vs</text></g>
<g clip-path="url(#cg1)"><text transform="scale(0.125)" x="2298.80" y="551.36" font-size="37.60" fill="#dedede" textLength="123.20" lengthAdjust="spacingAndGlyphs">Backup</text></g>
<g clip-path="url(#cg1)"><text transform="scale(0.125)" x="2298.80" y="632.84" font-size="37.60" fill="#dedede" textLength="186.40" lengthAdjust="spacingAndGlyphs">CMakeFiles</text></g>
<g clip-path="url(#cg1)"><text transform="scale(0.125)" x="2298.80" y="714.32" font-size="37.60" fill="#dedede" textLength="108.80" lengthAdjust="spacingAndGlyphs">Debug</text></g>
<g clip-path="url(#cg1)"><text transform="scale(0.125)" x="2298.80" y="795.80" font-size="37.60" fill="#dedede" textLength="114.40" lengthAdjust="spacingAndGlyphs">Effects</text></g>
<g clip-path="url(#cg1)"><text transform="scale(0.125)" x="2298.80" y="877.28" font-size="37.60" fill="#dedede" textLength="89.60" lengthAdjust="spacingAndGlyphs">Fonts</text></g>
<text transform="scale(0.125)" x="4929.60" y="2005.60" font-size="37.60" fill="#e6e6e6" textLength="194.40" lengthAdjust="spacingAndGlyphs">Asphalt02...</text>
<text transform="scale(0.125)" x="5204.80" y="2005.60" font-size="37.60" fill="#e6e6e6" textLength="194.40" lengthAdjust="spacingAndGlyphs">Asphalt02...</text>
<text transform="scale(0.125)" x="5480.00" y="2005.60" font-size="37.60" fill="#e6e6e6" textLength="194.40" lengthAdjust="spacingAndGlyphs">Asphalt02...</text>
<text transform="scale(0.125)" x="5755.20" y="2005.60" font-size="37.60" fill="#e6e6e6" textLength="194.40" lengthAdjust="spacingAndGlyphs">Asphalt02...</text>
<text transform="scale(0.125)" x="4929.60" y="2302.40" font-size="37.60" fill="#e6e6e6" textLength="194.40" lengthAdjust="spacingAndGlyphs">Asphalt02...</text>
<g clip-path="url(#cg0)"><text transform="scale(0.125)" x="2156.00" y="1166.40" font-size="37.60" fill="#e6e6e6" textLength="194.40" lengthAdjust="spacingAndGlyphs">Asphalt02...</text></g>
<g clip-path="url(#cg0)"><text transform="scale(0.125)" x="2433.60" y="1166.40" font-size="37.60" fill="#e6e6e6" textLength="194.40" lengthAdjust="spacingAndGlyphs">Asphalt02...</text></g>
<g clip-path="url(#cg0)"><text transform="scale(0.125)" x="2156.00" y="1467.20" font-size="37.60" fill="#e6e6e6" textLength="194.40" lengthAdjust="spacingAndGlyphs">Asphalt02...</text></g>
<g clip-path="url(#cg2)"><text transform="scale(0.125)" x="2433.60" y="1166.40" font-size="37.60" fill="#e6e6e6" textLength="194.40" lengthAdjust="spacingAndGlyphs">Asphalt02...</text></g>
<g clip-path="url(#cg2)"><text transform="scale(0.125)" x="2712.80" y="1166.40" font-size="37.60" fill="#e6e6e6" textLength="194.40" lengthAdjust="spacingAndGlyphs">Asphalt02...</text></g>
<g clip-path="url(#cg2)"><text transform="scale(0.125)" x="2988.80" y="1166.40" font-size="37.60" fill="#e6e6e6" textLength="194.40" lengthAdjust="spacingAndGlyphs">Asphalt02...</text></g>
<text transform="scale(0.125)" x="161.60" y="2878.00" font-size="36.80" fill="#d4d4d4" textLength="1036.00" lengthAdjust="spacingAndGlyphs">Loading texture "Materials/Environment/Default/specular.dds"</text>
<text transform="scale(0.125)" x="161.60" y="2924.24" font-size="36.80" fill="#d4d4d4" textLength="1012.00" lengthAdjust="spacingAndGlyphs">Loading texture "Materials/Environment/Default/diffuse.dds"</text>
<text transform="scale(0.125)" x="161.60" y="2970.48" font-size="36.80" fill="#d4d4d4" textLength="852.00" lengthAdjust="spacingAndGlyphs">Loading shader family "Shaders/Editor/Stipple.fam"</text>
<text transform="scale(0.125)" x="161.60" y="3016.72" font-size="36.80" fill="#d4d4d4" textLength="508.00" lengthAdjust="spacingAndGlyphs">Program started in 1.5 seconds</text>
<text transform="scale(0.125)" x="161.60" y="3062.96" font-size="36.80" fill="#d4d4d4" textLength="688.00" lengthAdjust="spacingAndGlyphs">Graphics device: AMD Radeon RX 6800 XT</text>
<text transform="scale(0.125)" x="1572.80" y="216.00" font-size="37.60" fill="#bcc0c8" textLength="64.00" lengthAdjust="spacingAndGlyphs">Box</text>
<text transform="scale(0.125)" x="2651.20" y="216.00" font-size="37.60" fill="#bcc0c8" textLength="122.40" lengthAdjust="spacingAndGlyphs">Release</text>
<text transform="scale(0.125)" x="4928.00" y="217.60" font-size="37.60" fill="#ffffff" textLength="129.60" lengthAdjust="spacingAndGlyphs" font-weight="bold">Project</text>
<text transform="scale(0.125)" x="5141.60" y="217.60" font-size="37.60" fill="#b4b8bc" textLength="105.60" lengthAdjust="spacingAndGlyphs">Scene</text>
</g>
</svg>
</body></html>
